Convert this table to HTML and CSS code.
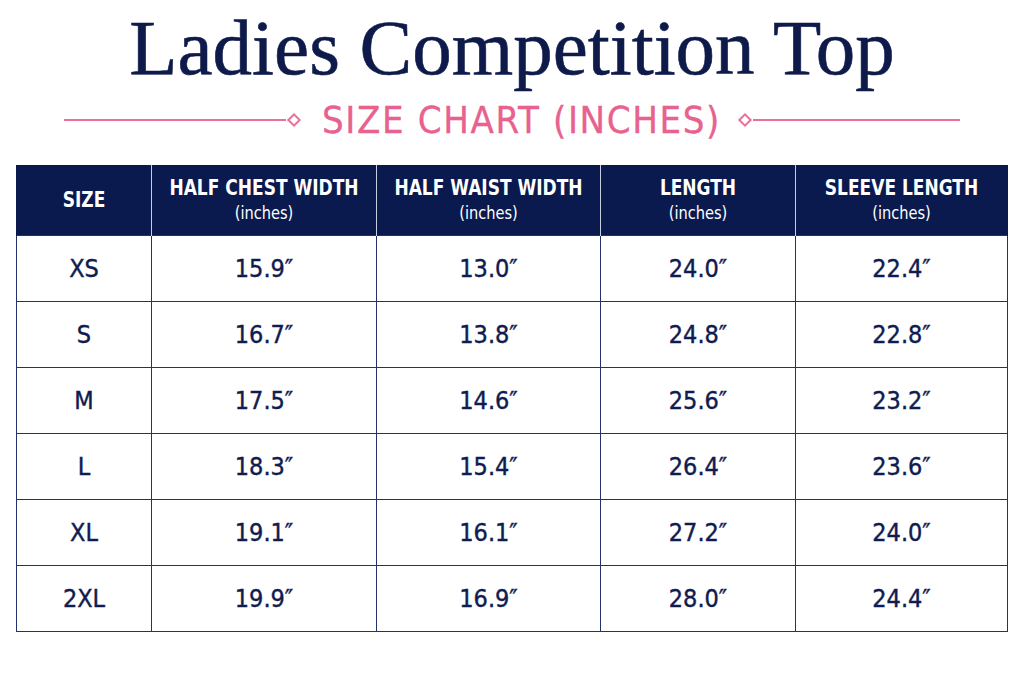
FILE: index.html
```html
<!DOCTYPE html>
<html>
<head>
<meta charset="utf-8">
<link rel="stylesheet" href="styles.css">
</head>
<body>
<div class="page">
  <h1 class="title">Ladies Competition Top</h1>
  <div class="subtitle">
    <span class="rule left"></span>
    <span class="diamond"></span>
    <span class="sub-text">SIZE CHART (INCHES)</span>
    <span class="diamond"></span>
    <span class="rule right"></span>
  </div>
  <table class="chart">
    <colgroup>
      <col class="c1"><col class="c2"><col class="c3"><col class="c4"><col class="c5">
    </colgroup>
    <thead>
      <tr>
        <th><span class="h">SIZE</span></th>
        <th><span class="h">HALF CHEST WIDTH</span><span class="u">(inches)</span></th>
        <th><span class="h">HALF WAIST WIDTH</span><span class="u">(inches)</span></th>
        <th><span class="h">LENGTH</span><span class="u">(inches)</span></th>
        <th><span class="h">SLEEVE LENGTH</span><span class="u">(inches)</span></th>
      </tr>
    </thead>
    <tbody>
      <tr><td>XS</td><td>15.9″</td><td>13.0″</td><td>24.0″</td><td>22.4″</td></tr>
      <tr><td>S</td><td>16.7″</td><td>13.8″</td><td>24.8″</td><td>22.8″</td></tr>
      <tr><td>M</td><td>17.5″</td><td>14.6″</td><td>25.6″</td><td>23.2″</td></tr>
      <tr><td>L</td><td>18.3″</td><td>15.4″</td><td>26.4″</td><td>23.6″</td></tr>
      <tr><td>XL</td><td>19.1″</td><td>16.1″</td><td>27.2″</td><td>24.0″</td></tr>
      <tr><td>2XL</td><td>19.9″</td><td>16.9″</td><td>28.0″</td><td>24.4″</td></tr>
    </tbody>
  </table>
</div>
</body>
</html>
```

FILE: styles.css
```css
html, body {
  margin: 0;
  padding: 0;
  background: #ffffff;
}
.page {
  width: 1024px;
  height: 683px;
  padding-top: 4px;
  box-sizing: border-box;
}
.title {
  margin: 0;
  text-align: center;
  font-family: "Liberation Serif", "Times New Roman", serif;
  font-weight: normal;
  font-size: 79px;
  line-height: 88px;
  color: #0e1a4a;
  -webkit-text-stroke: 0.6px #0e1a4a;
}
.subtitle {
  display: flex;
  align-items: center;
  justify-content: center;
  height: 48px;
  margin-top: 4px;
}
.rule {
  height: 2px;
  background: #e8709a;
}
.rule.left { width: 222px; margin-left: 64px; }
.rule.right { margin-right: 64px; flex: 1; }
.diamond {
  width: 6px;
  height: 6px;
  border: 2px solid #e8709a;
  transform: rotate(45deg);
  margin: 0 3px;
  flex: none;
}
.sub-text {
  font-family: "DejaVu Sans Condensed", "DejaVu Sans", sans-serif;
  font-size: 38px;
  letter-spacing: 1.6px;
  color: #e8628f;
  -webkit-text-stroke: 0.3px #e8628f;
  margin: 0 16px 0 20px;
  white-space: nowrap;
}
.chart {
  margin: 21px 0 0 16px;
  width: 991px;
  border-collapse: collapse;
  table-layout: fixed;
  color: #101c50;
}
.c1 { width: 135px; }
.c2 { width: 225px; }
.c3 { width: 224px; }
.c4 { width: 195px; }
.c5 { width: 212px; }
.chart th {
  background: #0b1a4e;
  color: #ffffff;
  height: 70px;
  padding: 0;
  border-left: 1px solid #c9cde0;
  vertical-align: middle;
  font-weight: normal;
}
.chart th:first-child { border-left: 1px solid #0b1a4e; }
.chart th:last-child { border-right: 1px solid #0b1a4e; }
.h {
  display: block;
  font-family: "DejaVu Sans Condensed", "DejaVu Sans", sans-serif;
  font-weight: bold;
  font-size: 22px;
  line-height: 26px;
  white-space: nowrap;
  transform: scaleX(0.86);
}
.u {
  display: block;
  font-family: "DejaVu Sans Condensed", "DejaVu Sans", sans-serif;
  font-size: 18px;
  line-height: 24px;
  transform: scaleX(0.9);
}
.chart td {
  height: 65px;
  padding: 0;
  text-align: center;
  vertical-align: middle;
  border: 1.5px solid #25316a;
  font-family: "DejaVu Sans Condensed", "DejaVu Sans", sans-serif;
  font-size: 25px;
  -webkit-text-stroke: 0.4px #101c50;
}
```
